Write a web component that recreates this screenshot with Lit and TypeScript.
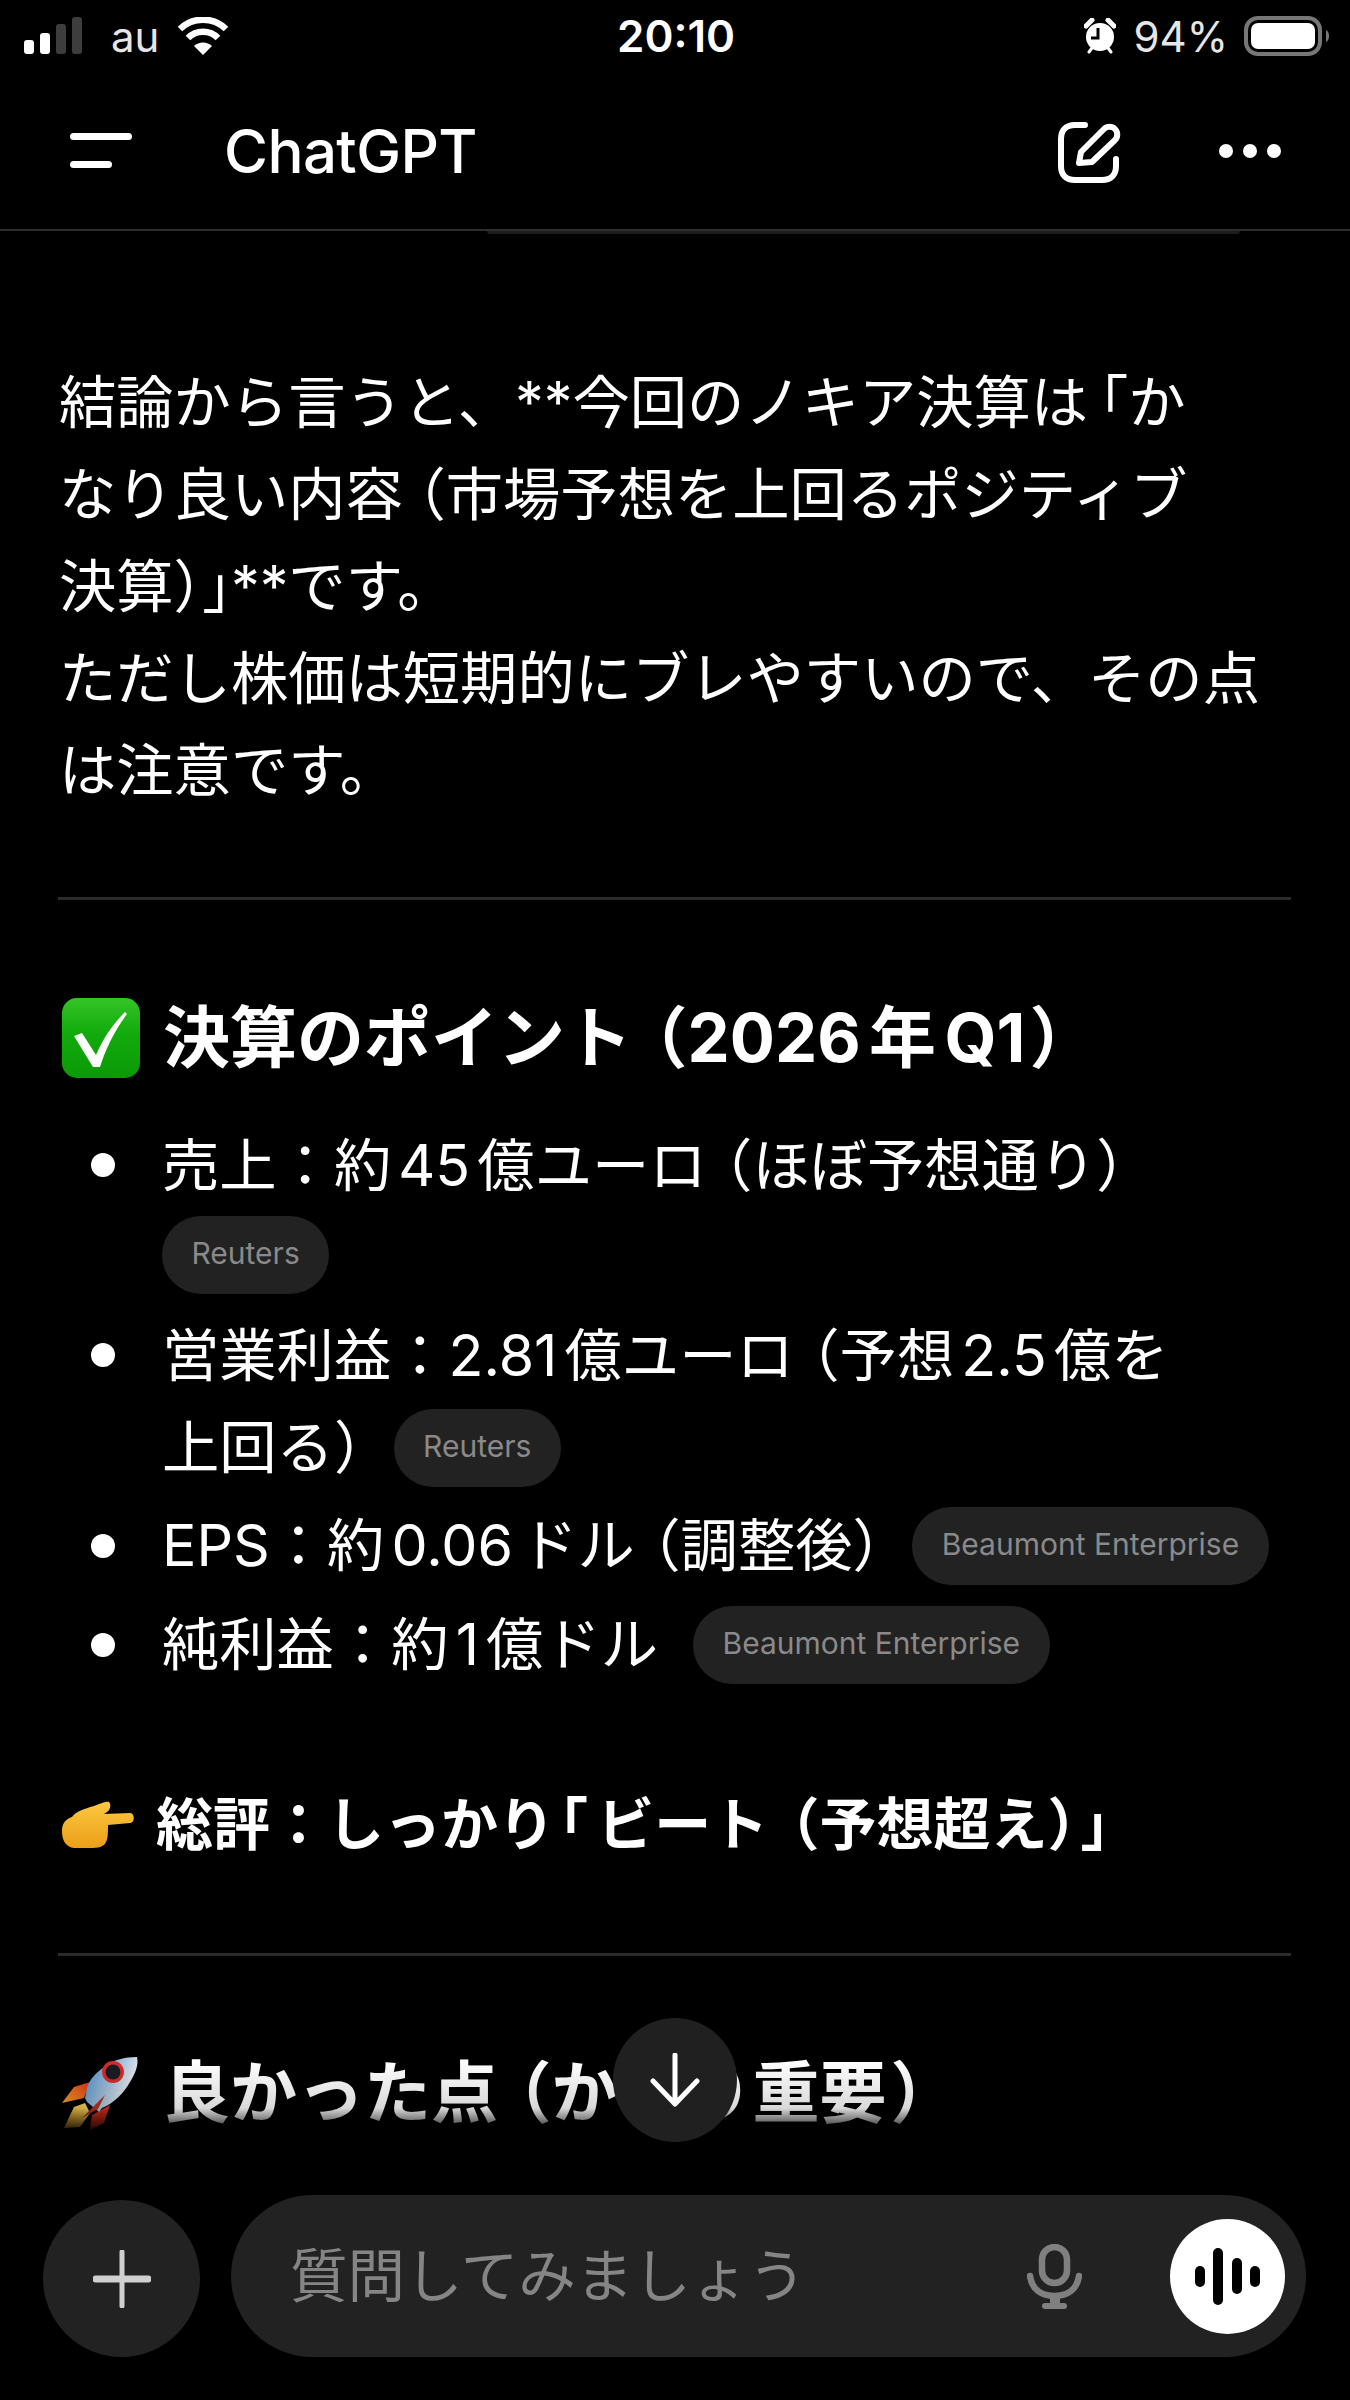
import {LitElement, css, html, svg} from 'lit';
import {customElement} from 'lit/decorators.js';

const checkEmoji = html`<svg class="emoji" width="78" height="80" viewBox="0 0 78 80">
  <defs><linearGradient id="chk" x1="0" y1="0" x2="0" y2="1"><stop offset="0" stop-color="#35c426"/><stop offset="0.45" stop-color="#12aa0c"/><stop offset="1" stop-color="#0b9a07"/></linearGradient></defs>
  <rect x="0" y="0" width="78" height="80" rx="15" fill="url(#chk)"/>
  <path d="M12 38 L20 35 L34 57 C42 39 51 26 63 14 L65 16 C53 32 44 50 38 69 L31 69 Z" fill="#fff"/>
</svg>`;

const handEmoji = html`<svg class="emoji" width="72" height="47" viewBox="0 0 72 47">
  <defs><linearGradient id="hnd" x1="0" y1="0" x2="0" y2="1"><stop offset="0" stop-color="#fdc843"/><stop offset="1" stop-color="#ec9f18"/></linearGradient></defs>
  <path d="M0 30 C0 22 4 18 10 16 C14 10 22 8 32 5 C38 3 44 0 47 1 C49 3 49 8 45 11 L42 13 L68 12 C73 12 73 22 68 22 L46 24 C46 30 46 38 44 41 C42 46 36 47 28 47 L12 47 C4 46 0 40 0 30Z" fill="url(#hnd)"/>
</svg>`;

const rocketEmoji = html`<svg class="emoji" width="78" height="76" viewBox="0 0 78 76">
  <defs>
    <linearGradient id="rkt" x1="0.1" y1="0.3" x2="0.8" y2="0.7"><stop offset="0" stop-color="#5f9ace"/><stop offset="0.55" stop-color="#a9c4dc"/><stop offset="1" stop-color="#eceff2"/></linearGradient>
    <linearGradient id="fin" x1="1" y1="0" x2="0" y2="1"><stop offset="0" stop-color="#e2301c"/><stop offset="1" stop-color="#f5a623"/></linearGradient>
    <linearGradient id="flm" x1="1" y1="0" x2="0" y2="1"><stop offset="0" stop-color="#f6dc62"/><stop offset="1" stop-color="#e8a020"/></linearGradient>
  </defs>
  <path d="M28 27 L12 32 L0 48 L22 43Z" fill="url(#fin)"/>
  <path d="M48 50 L42 68 L28 75 L30 60Z" fill="#d92d1a"/>
  <path d="M23 48 L12 52 L2 73 L18 72 L28 58Z" fill="url(#flm)"/>
  <path d="M75 2 C62 2 52 5 45 10 C34 17 27 25 25 33 L23 43 L25 47 L37 57 L40 53 C52 48 62 38 68 27 C73 19 77 10 75 2Z" fill="url(#rkt)"/>
  <circle cx="51" cy="17" r="11" fill="#d72a2c"/>
  <circle cx="51" cy="17" r="7.5" fill="#1b1c22"/>
  <path d="M43 40 L20 63 L36 54Z" fill="#b9301f"/>
</svg>`;

// Japanese brackets are set narrower than a full em in the reference
const setText = (text: string) =>
  text.split(/([（）「」])/).map((part) => {
    if (part === '（') return html`<span class="op">${part}</span>`;
    if (part === '）') return html`<span class="cl">${part}</span>`;
    if (part === '「') return html`<span class="ob">${part}</span>`;
    if (part === '」') return html`<span class="cb">${part}</span>`;
    return part;
  });

const chip = (label: string, tight = false) =>
  html`<span class="chip ${tight ? 'tight' : ''}">${label}</span>`;

@customElement('app-root')
export class AppRoot extends LitElement {
  static styles = css`
    :host {
      display: block;
      width: 1350px;
      height: 2400px;
      background: #000;
      color: #fff;
      font-family: Inter, 'Noto Sans CJK JP', sans-serif;
      overflow: hidden;
    }

    .page {
      position: relative;
      display: flex;
      flex-direction: column;
      height: 2400px;
    }

    .status {
      height: 72px;
      display: flex;
      align-items: center;
      padding: 0 21px 0 24px;
      font-size: 42px;
      font-weight: 400;
      color: #e6e6e6;
    }
    .status-left { display: flex; align-items: center; width: 593px; }
    .status-left .carrier { margin-left: 29px; margin-right: 18px; }
    .time { width: 120px; font-size: 44px; font-weight: 600; color: #fff; white-space: nowrap; }
    .status-right { margin-left: auto; display: flex; align-items: center; gap: 18px; }
    .status-right svg:last-child { margin-left: -2px; }

    .nav {
      height: 157px;
      display: flex;
      align-items: center;
      padding: 0 69px 0 70px;
      border-bottom: 2px solid #2e2e2e;
      position: relative;
    }
    .nav::after {
      content: '';
      position: absolute;
      left: 487px;
      width: 753px;
      bottom: -5px;
      height: 3px;
      background: #1c1c1c;
      border-radius: 0 0 12px 12px;
    }
    .burger { display: block; }
    .title { margin-left: 92px; font-size: 60px; font-weight: 500; letter-spacing: -0.6px; }
    .nav-actions { margin-left: auto; display: flex; align-items: center; gap: 99px; }
    .edit { margin-top: 4px; overflow: visible; }

    main {
      flex: 1;
      min-height: 0;
      padding: 0 58px;
      overflow: hidden;
      position: relative;
      white-space: nowrap;
      text-spacing-trim: space-all;
    }

    .op, .cl, .ob, .cb { font-feature-settings: 'halt'; }
    .op { padding-left: 0.25em; }
    .ob { padding-left: 0.2em; }

    .lead {
      margin: 125px 0 0;
      padding-left: 1px;
      font-size: 57.3px;
      line-height: 92px;
      text-autospace: normal;
    }
    hr {
      border: 0;
      height: 3px;
      background: #2b2b2b;
      margin: 0;
      width: 1233px;
    }
    .rule-1 { margin-top: 81px; }
    .rule-2 { margin-top: 82px; }

    h2 {
      margin: 0;
      display: flex;
      align-items: center;
      font-size: 67px;
      font-weight: 700;
      line-height: 92px;
      gap: 23px;
      padding-left: 4px;
      text-autospace: normal;
    }
    h2 .op { padding-left: 0.33em; }
    h2 .cl { padding-left: 0.06em; }
    .h-points { margin-top: 92px; }
    .h-good { margin-top: 91px; }
    .h-good .op { padding-left: 0.3em; }

    ul {
      list-style: none;
      margin: 35px 0 0;
      padding: 0 0 0 33px;
      font-size: 57.3px;
      text-autospace: normal;
    }
    ul .op { padding-left: 0.3em; }
    li {
      position: relative;
      line-height: 92px;
      padding-left: 71px;
    }
    li::before {
      content: '';
      position: absolute;
      left: 0;
      top: 34px;
      width: 24px;
      height: 24px;
      border-radius: 50%;
      background: #fff;
    }
    li.pill-line { line-height: 99px; }
    li.pill-line::before { top: 38px; }
    .own-row { display: block; height: 78px; margin: 5px 0 15px; line-height: 78px; }

    .chip {
      display: inline-block;
      height: 78px;
      padding: 0 29.5px;
      border-radius: 39px;
      background: #222;
      color: #8a8a8a;
      font-size: 30px;
      font-weight: 400;
      line-height: 74px;
      vertical-align: middle;
      margin-left: 35px;
      margin-bottom: 9px;
    }
    .chip.tight { margin-left: 31px; }
    .own-row .chip { margin-left: 0; margin-bottom: 0; vertical-align: top; }

    .summary {
      margin: 85px 0 0;
      display: flex;
      align-items: center;
      gap: 22px;
      padding-left: 4px;
      font-size: 57px;
      font-weight: 700;
      line-height: 92px;
      text-spacing-trim: space-all;
    }
    .summary .ob { padding-left: 0.08em; padding-right: 0.16em; }
    .summary .op { padding-left: 0.4em; }
    .summary .cl { padding-right: 0.08em; }

    .fade {
      position: absolute;
      left: 0;
      right: 0;
      bottom: 0;
      height: 340px;
      background: linear-gradient(#0000 0, #00000026 48px, #000 75px);
      pointer-events: none;
    }

    .down {
      position: absolute;
      left: 613px;
      top: 2018px;
      width: 124px;
      height: 124px;
      border-radius: 50%;
      background: #202020;
      display: flex;
      align-items: center;
      justify-content: center;
    }

    .composer {
      position: absolute;
      left: 43px;
      right: 44px;
      bottom: 43px;
      display: flex;
      align-items: flex-end;
      gap: 31px;
    }
    .plus {
      flex: none;
      width: 157px;
      height: 157px;
      border-radius: 50%;
      background: #222;
      display: flex;
      align-items: center;
      justify-content: center;
    }
    .field {
      flex: 1;
      height: 162px;
      border-radius: 81px;
      background: #222;
      display: flex;
      align-items: center;
      padding: 0 21px 0 59px;
    }
    .placeholder { font-size: 57.5px; color: #858585; margin-bottom: 8px; }
    .mic { margin-left: auto; margin-right: 88px; display: block; }
    .voice {
      flex: none;
      width: 115px;
      height: 115px;
      border-radius: 50%;
      background: #fff;
      display: flex;
      align-items: center;
      justify-content: center;
    }
    .emoji { flex: none; display: block; }
  `;

  render() {
    return html`
      <div class="page">
        <div class="status">
          <div class="status-left">
            <svg width="58" height="38" viewBox="0 0 58 38">
              <rect x="0" y="23" width="10" height="14" rx="3" fill="#fff"/>
              <rect x="16" y="16" width="10" height="21" rx="3" fill="#fff"/>
              <rect x="32" y="7" width="10" height="30" rx="3" fill="#3d3d3d"/>
              <rect x="48" y="0" width="10" height="37" rx="3" fill="#3d3d3d"/>
            </svg>
            <span class="carrier">au</span>
            <svg width="52" height="38" viewBox="0 0 52 38">
              ${svg`<path d="M26 38 L17 29 A13 13 0 0 1 35 29 Z" fill="#fff"/>
              <path d="M11 21 A21 21 0 0 1 41 21" fill="none" stroke="#fff" stroke-width="6.5"/>
              <path d="M3 12 A33 33 0 0 1 49 12" fill="none" stroke="#fff" stroke-width="6.5"/>`}
            </svg>
          </div>
          <span class="time">20:10</span>
          <div class="status-right">
            <svg width="32" height="36" viewBox="0 0 32 36">
              <circle cx="16" cy="19" r="14" fill="#fff"/>
              <path d="M14 10 V20 H7" fill="none" stroke="#000" stroke-width="3"/>
              <path d="M2 8 L8 2 M30 8 L24 2" stroke="#fff" stroke-width="5" stroke-linecap="round"/>
              <path d="M5 34 L8 30 M27 34 L24 30" stroke="#fff" stroke-width="3" stroke-linecap="round"/>
            </svg>
            <span>94%</span>
            <svg width="85" height="40" viewBox="0 0 85 40">
              <rect x="2" y="2" width="74" height="36" rx="12" fill="none" stroke="#777" stroke-width="4"/>
              <rect x="7" y="7" width="64" height="26" rx="7" fill="#fff"/>
              <path d="M82 14 C84 15 85 17 85 20 C85 23 84 25 82 26Z" fill="#777"/>
            </svg>
          </div>
        </div>

        <div class="nav">
          <svg class="burger" width="62" height="36" viewBox="0 0 62 36">
            <rect x="0" y="0" width="62" height="7" rx="3.5" fill="#fff"/>
            <rect x="0" y="28" width="42" height="7" rx="3.5" fill="#fff"/>
          </svg>
          <span class="title">ChatGPT</span>
          <div class="nav-actions">
            <svg class="edit" width="62" height="61" viewBox="0 0 62 61">
              <path d="M27 3 H17 C8 3 3 8 3 17 V44 C3 53 8 58 17 58 H44 C53 58 58 53 58 44 V37" fill="none" stroke="#fff" stroke-width="6" stroke-linecap="round"/>
              <path d="M21 41 L23 30 L46 7 C49 4 54 4 57 7 C60 10 60 15 57 18 L34 40 Z" fill="none" stroke="#fff" stroke-width="6" stroke-linejoin="round"/>
            </svg>
            <svg width="62" height="14" viewBox="0 0 62 14">
              <circle cx="7" cy="7" r="7" fill="#fff"/>
              <circle cx="31" cy="7" r="7" fill="#fff"/>
              <circle cx="55" cy="7" r="7" fill="#fff"/>
            </svg>
          </div>
        </div>

        <main>
          <p class="lead">${setText('結論から言うと、**今回のノキア決算は「か')}<br>${setText('なり良い内容（市場予想を上回るポジティブ')}<br>${setText('決算）」**です。')}<br>ただし株価は短期的にブレやすいので、その点<br>は注意です。</p>
          <hr class="rule-1"/>
          <h2 class="h-points">${checkEmoji}<span>${setText('決算のポイント（2026年Q1）')}</span></h2>
          <ul>
            <li>${setText('売上：約45億ユーロ（ほぼ予想通り）')}<span class="own-row">${chip('Reuters')}</span></li>
            <li>${setText('営業利益：2.81億ユーロ（予想2.5億を')}<br>${setText('上回る）')}${chip('Reuters', true)}</li>
            <li class="pill-line">${setText('EPS：約0.06ドル（調整後）')}${chip('Beaumont Enterprise', true)}</li>
            <li class="pill-line">純利益：約1億ドル${chip('Beaumont Enterprise')}</li>
          </ul>
          <p class="summary">${handEmoji}<span>${setText('総評：しっかり「ビート（予想超え）」')}</span></p>
          <hr class="rule-2"/>
          <h2 class="h-good">${rocketEmoji}<span>${setText('良かった点（かなり重要）')}</span></h2>
          <div class="fade"></div>
        </main>

        <div class="down">
          <svg width="52" height="54" viewBox="0 0 52 54">
            <path d="M26 2 V50 M4 28 L26 51 L48 28" fill="none" stroke="#fff" stroke-width="5" stroke-linecap="round" stroke-linejoin="round"/>
          </svg>
        </div>

        <div class="composer">
          <div class="plus">
            <svg width="58" height="58" viewBox="0 0 58 58">
              <path d="M29 2 V56" stroke="#d0d0d0" stroke-width="5" stroke-linecap="round"/>
              <path d="M3 29 H55" stroke="#d0d0d0" stroke-width="7" stroke-linecap="round"/>
            </svg>
          </div>
          <div class="field">
            <span class="placeholder">質問してみましょう</span>
            <svg class="mic" width="55" height="65" viewBox="0 0 55 65">
              <rect x="15" y="3" width="25" height="36" rx="12.5" fill="none" stroke="#808080" stroke-width="6.5"/>
              <path d="M3 32 C5 46 15 52 27.5 52 C40 52 50 46 52 32" fill="none" stroke="#808080" stroke-width="6.5" stroke-linecap="round"/>
              <rect x="23" y="50" width="10" height="12" fill="#808080"/>
              <rect x="15" y="59" width="25" height="6" rx="3" fill="#808080"/>
            </svg>
            <div class="voice">
              <svg width="65" height="57" viewBox="0 0 65 57">
                <rect x="0" y="18" width="10" height="21" rx="5" fill="#000"/>
                <rect x="18" y="0" width="10" height="57" rx="5" fill="#000"/>
                <rect x="37" y="10" width="10" height="36" rx="5" fill="#000"/>
                <rect x="55" y="18" width="10" height="21" rx="5" fill="#000"/>
              </svg>
            </div>
          </div>
        </div>
      </div>
    `;
  }
}
